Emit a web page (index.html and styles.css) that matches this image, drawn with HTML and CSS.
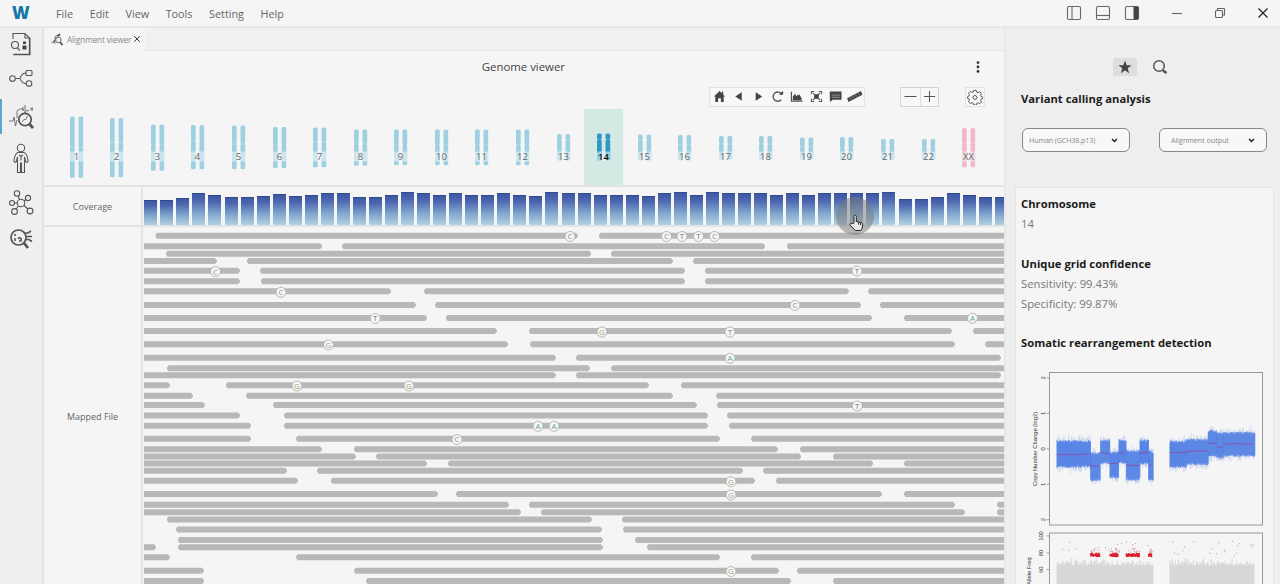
FILE: index.html
```html
<!DOCTYPE html>
<html lang="en">
	<head>
		<meta charset="UTF-8">
		<title>Genome viewer</title>
		<link rel="stylesheet" href="styles.css">
	</head>
	<body>
		<header class="titlebar">
			<div class="logo">W</div>
			<nav class="menu">
				<a>File</a><a>Edit</a><a>View</a><a>Tools</a><a>Setting</a><a>Help</a>
			</nav>
			<div class="win">
				<svg width="16" height="16" viewBox="0 0 16 16"><rect x="1.5" y="1.5" width="13" height="13" rx="1.5"/><path d="M6 1.5v13"/></svg>
				<svg width="16" height="16" viewBox="0 0 16 16"><rect x="1.5" y="1.5" width="13" height="13" rx="1.5"/><path d="M1.5 10.5h13"/></svg>
				<svg width="16" height="16" viewBox="0 0 16 16"><rect x="1.5" y="1.5" width="13" height="13" rx="1.5"/><path class="fill" d="M9.5 1.5h4l1 1v11l-1 1h-4z"/></svg>
				<svg class="min" width="12" height="12" viewBox="0 0 12 12"><path d="M1 6.500h10"/></svg>
				<svg class="max" width="12" height="12" viewBox="0 0 12 12"><rect x="1.500" y="3.500" width="7" height="7" rx="1"/><path d="M3.500 3.500V1.500h6.500l.5.5v6h-2"/></svg>
				<svg class="close" width="12" height="12" viewBox="0 0 12 12"><path d="M1.500 1.500l9 9M10.500 1.500l-9 9"/></svg>
			</div>
		</header>
		<div class="app">
			<aside class="side">
				<a><svg width="26" height="26" viewBox="0 0 26 26"><path d="M5 8V2.500h12l4.500 4.500v16.500H5M17 2.500V7h4.500"/><path d="M21.700 7v16.500H6" stroke-width="1.600"/><circle cx="7" cy="14" r="3.500"/><path d="M9.500 17l2.500 2.500"/><path class="fill" d="M15 10.500h3v2.500h-3zM14.500 14.500h4v4h-4z"/></svg></a>
				<a><svg width="26" height="26" viewBox="0 0 26 26"><circle cx="4.500" cy="13.500" r="2.800"/><rect x="18" y="5.500" width="6" height="5" rx="1"/><circle cx="21" cy="18.500" r="2.800"/><path d="M7.500 13.500h4c1.500 0 1-5.500 6.500-5.500M11.500 13.500c1.500 0 1 5 6.500 5"/></svg></a>
				<a class="on"><svg width="26" height="28" viewBox="0 0 26 28"><path class="thin" d="M1 18h4l1-4 1.500 9 1.500-6M9 15V9c0-3 5-4 7-2M15 4v4M17 2v8l2-3 2 1M22 6h3M24 4v4"/><circle cx="17" cy="16.500" r="6.200" stroke-width="1.700"/><path d="M21.500 21l3.500 4" stroke-width="2.800"/><path class="thin" d="M14 19l2.500-3 1 1 2-4"/></svg></a>
				<a><svg width="26" height="34" viewBox="0 0 26 34"><circle cx="13" cy="6" r="3.700"/><path d="M10 10.500c-3 1-3.500 4-4 8-.3 2 2 2.200 2.500.5l1-4v15.500h3V21h1v9.500h3V15l1 4c.5 1.700 2.800 1.500 2.500-.5-.5-4-1-7-4-8zM11 13l2 1.500 2-1.500M13 14.500v4"/></svg></a>
				<a><svg width="26" height="26" viewBox="0 0 26 26"><circle cx="13" cy="13" r="3.800"/><circle cx="9" cy="3.500" r="2.700"/><circle cx="20" cy="8" r="2.600"/><circle cx="4" cy="13" r="2.500"/><circle cx="6.500" cy="21.500" r="2.900"/><circle cx="22" cy="21" r="2.900"/><path d="M10 6l1.500 3.500M18 9.500l-2 1.500M6.500 13H9M10.500 16l-2.500 3M16 15.500l4 3.500"/></svg></a>
				<a><svg width="26" height="24" viewBox="0 0 26 24"><circle cx="10.500" cy="10.500" r="7.500" stroke-width="1.700"/><path d="M16 16l4 5" stroke-width="2.800"/><path d="M7 7v2M7 11v3M10 12c2-3 4 0 3 2h-2M17 6h3l3-2M18 9.500h6M18 12.500h3l3 2" stroke-width="1.600"/></svg></a>
			</aside>
			<main class="main">
				<div class="tabs">
					<div class="tab">
						<svg width="12" height="13" viewBox="0 0 26 28"><path d="M1 20h5l1-5 2 8M9 15V9c0-3 5-4 7-2" /><circle cx="16" cy="15" r="6"/><path d="M20 20l5 6M14 6l6-3" stroke-width="4"/></svg>
						<span>Alignment viewer</span>
						<svg class="x" width="8" height="8" viewBox="0 0 8 8"><path d="M1.200 1.200l5.500 5.500M6.700 1.200L1.200 6.700"/></svg>
					</div>
					<div class="tabfill"></div>
				</div>
				<div class="head">
					<h1>Genome viewer</h1>
					<svg class="dots" width="4" height="12" viewBox="0 0 4 12"><circle cx="2" cy="1.600" r="1.400"/><circle cx="2" cy="6" r="1.400"/><circle cx="2" cy="10.400" r="1.400"/></svg>
				</div>
				<div class="tools">
					<div class="group">
						<i><svg viewBox="0 0 14 14"><path class="fill" d="M7 1L1 7h1.500v6h3V9h3v4h3V7H13l-2-2V1.500H9.500V3.500z"/></svg></i>
						<i><svg viewBox="0 0 14 14"><path class="fill" d="M10.500 2.500v9L3.500 7z"/></svg></i>
						<i><svg viewBox="0 0 14 14"><path class="fill" d="M4 2.500v9L11 7z"/></svg></i>
						<i><svg viewBox="0 0 14 14"><path d="M11.500 4.500A5 5 0 1 0 11 10.500" stroke-width="1.500"/><path class="fill" d="M8.500 5H13V.8z"/></svg></i>
						<i><svg viewBox="0 0 14 14"><path d="M1.500 2v10h12" stroke-width="1.300"/><path class="fill" d="M3 11V7l2.500-3 1.500 3 1-2 1 1 1-1.500L12.500 9v2z"/></svg></i>
						<i><svg viewBox="0 0 14 14"><path d="M1.500 4.500v-3h3M9.500 1.500h3v3M12.500 9.500v3h-3M4.500 12.500h-3v-3M3 3l2 2M11 3L9 5M3 11l2-2M11 11L9 9"/><path class="fill" d="M4.500 4.500h5v5h-5z"/></svg></i>
						<i><svg viewBox="0 0 14 14"><path class="fill" d="M.8 1.500h12.700v9H4L1 13z"/><path class="light" d="M3 5.500h8.500M3 7.800h8.500"/></svg></i>
						<i><svg width="18" viewBox="-2 0 18 14"><path class="fill" d="M-1 9L14 1l1.500 4-15 8z"/><path class="light" d="M2 8l1 2M5 6.500l1 2M8 5l1 2M11 3.500l1 2"/></svg></i>
					</div>
					<div class="group zoom">
						<i><svg viewBox="0 0 14 14"><path d="M.5 7h13"/></svg></i>
						<i><svg viewBox="0 0 14 14"><path d="M1 7h12M7 1v12"/></svg></i>
					</div>
					<div class="group gear">
						<svg width="18" height="18" viewBox="0 0 18 18"><path d="M7.500 1.500h3l.5 2 1.500.7 1.800-1 2 2-1 1.800.6 1.500 2 .5v1.500l-2 .9-.6 1.300 1 1.800-2 2-1.800-1-1.500.6-.5 1.900h-3L7 16l-1.500-.6-1.800 1-2-2 1-1.800-.6-1.500-1.500-.6V8.700L2.100 8l.6-1.500-1-1.800 2-2 1.800 1L7 3.500z"/><circle cx="9" cy="9.500" r="2.200"/></svg>
					</div>
				</div>
				<div class="chroms" id="chroms"></div>
				<div class="track">
					<div class="label">Coverage</div>
					<div class="bars" id="bars"></div>
				</div>
				<div class="track mapped">
					<div class="label">Mapped File</div>
					<svg class="reads" id="reads" width="861" height="357" viewBox="143 227 861 357"></svg>
				</div>
				<svg class="cursor" width="40" height="40" viewBox="0 0 40 40"><circle cx="20" cy="20" r="19"/><path d="M19 27v-6.500c0-1.800 2.300-1.800 2.300 0v5l4.500 1c1.500.3 2 1 1.800 2.500l-.6 3.500-1.200 2h-5.500l-5.500-5.500c-.6-1.200.8-1.900 1.700-1.200z"/><path class="thin" d="M23.500 26.500v2M25.500 27v2"/></svg>
			</main>
			<section class="panel">
				<div class="switch">
					<span class="star"><svg width="14" height="14" viewBox="0 0 14 14"><path class="fill" d="M7 .5l1.700 4.700 4.900.1-3.900 3 1.400 4.900L7 10.300l-4.100 2.900 1.400-4.900-3.900-3 4.900-.1z"/></svg></span>
					<svg width="16" height="16" viewBox="0 0 16 16"><circle cx="7" cy="7" r="5.300" stroke-width="1.500"/><path d="M11 11.500l3.500 2.500" stroke-width="2.600"/></svg>
				</div>
				<h2>Variant calling analysis</h2>
				<div class="selects">
					<div class="select"><span>Human (GCH38.p13)</span><svg width="7" height="5" viewBox="0 0 7 5"><path d="M1 1l2.500 2.500L6 1"/></svg></div>
					<div class="select second"><span>Alignment output</span><svg width="7" height="5" viewBox="0 0 7 5"><path d="M1 1l2.500 2.500L6 1"/></svg></div>
				</div>
				<div class="card">
					<h2>Chromosome</h2>
					<p>14</p>
					<h2>Unique grid confidence</h2>
					<p>Sensitivity: 99.43%</p>
					<p>Specificity: 99.87%</p>
					<h2>Somatic rearrangement detection</h2>
					<svg class="plot" id="plot" width="256" height="230" viewBox="16 360 256 230"></svg>
				</div>
			</section>
		</div>
		<script src="main.js"></script>
	</body>
</html>
```
FILE: styles.css
```css
* {margin:0; padding:0; box-sizing:border-box;}
body {width:1280px; height:584px; overflow:hidden; background:#f5f5f5; font-family:"Open Sans","Noto Sans",sans-serif; color:#555; display:flex; flex-direction:column;}
svg {fill:none; stroke:#555; stroke-width:1.1; display:block; flex:none;}
.fill {fill:#444; stroke:none;}
.thin {stroke-width:.8;}
.light {stroke:#aaa; stroke-width:.8;}

.titlebar {height:28px; flex:none; display:flex; align-items:center; border-bottom:2px solid #e8e8e8; padding-left:12px;}
.logo {width:44px; font:800 17px/24px "Open Sans",sans-serif; color:#1478a8;}
.menu {display:flex; gap:16.600px; font-size:10.800px; color:#666;}
.win {margin-left:auto; display:flex; align-items:center; padding-right:11px;}
.win svg {margin-right:13px; stroke:#666;}
.win svg.min {margin-left:18px; margin-right:31px;}
.win svg.max {margin-right:31px;}
.win svg.close {margin-right:0; stroke:#222; stroke-width:1.2;}

.app {flex:1; min-height:0; display:flex;}
.side {width:44px; flex:none; background:#efefef; border-right:2px solid #e4e4e4; display:flex; flex-direction:column;}
.side a {display:flex; align-items:center; justify-content:center; height:34px; margin-top:-1px;}
.side a:nth-child(2) {margin-top:1px; height:32px;}
.side a.on {border-left:2px solid #5aa6cc; height:35px; margin-top:5px; padding-right:3px;}
.side a:nth-child(4) {margin-top:4px; height:42px;}
.side a:nth-child(5) {margin-top:5px; height:36px;}
.side a:nth-child(6) {margin-top:2px; height:32px;}

.main {width:960px; flex:none; display:flex; flex-direction:column; position:relative;}
.tabs {height:23px; flex:none; display:flex;}
.tab {width:101px; display:flex; align-items:center; padding-left:7px; font-size:8.200px; color:#888;}
.tab span {margin:0 2px 0 4px; white-space:nowrap; letter-spacing:-.12px;}
.tab svg {stroke-width:2;}
.tab .x {stroke:#333; stroke-width:1; margin-top:-2px;}
.tabfill {flex:1; background:#f0f0f0; border-bottom:1px solid #e6e6e6;}
.head {height:33px; flex:none; display:flex; align-items:center; justify-content:center; padding-bottom:2px;}
.head h1 {font-size:11.400px; font-weight:400; color:#444; margin-left:auto;}
.dots {margin-left:411px; margin-right:24px; stroke:none; fill:#333;}
.tools {height:25px; flex:none; display:flex; align-items:center; padding-left:665px;}
.group {display:flex; height:20px; border:1px solid #e2e2e2; background:#f8f8f8;}
.group i {width:19.300px; display:flex; align-items:center; justify-content:center;}
.group i svg {width:13px; height:13px;}
.group i svg[width="18"] {width:17px;}
.zoom {margin-left:35px; border-color:#d4d4d4;}
.zoom i {width:18.500px;}
.zoom i + i {border-left:1px solid #ddd;}
.gear {margin-left:26px; width:20px; align-items:center; justify-content:center;}
.gear svg {width:16px; height:16px;}

.chroms {height:76px; flex:none; display:grid; grid-template-columns:repeat(23,40.570px); padding-left:12px;}
.chrom {display:flex; justify-content:center;}
.chrom svg {stroke:none; width:39px; height:76px;}
.chrom.on svg {background:#d3e9e4;}
.chrom text, .reads text {font-family:"Open Sans",sans-serif; text-anchor:middle;}
.chrom text {font-size:9.500px; fill:#666;}
.chrom.on text {fill:#111; font-weight:600;}

.track {height:40px; flex:none; display:flex; border-top:2px solid #e3e3e3;}
.label {width:99px; flex:none; border-right:2px solid #e3e3e3; display:flex; align-items:center; justify-content:center; font-size:9px; color:#666; padding-top:1px;}
.bars {flex:1; display:flex; align-items:flex-end; overflow:hidden; padding-left:1.300px; background:linear-gradient(#f5f5f5 40%,#f0f6fa);}
.bar {width:13px; margin-right:3.050px; flex:none; background:linear-gradient(#3e58a3 0,#4b67ae 20%,#7fa4cd 60%,#b4cfdf 100%); border-top:1px solid #33498e;}
.mapped {height:auto; flex:1; min-height:0; overflow:hidden;}
.mapped .label {padding-top:22px;}
.reads {stroke:none;}
.reads path {fill:#b9b8b9;}
.reads circle {fill:#f7f6f6; stroke:#aaa; stroke-width:.8;}
.reads text {font-size:8px;}
.cursor {position:absolute; left:791px; top:168px; stroke:none;}
.cursor circle {fill:#777; fill-opacity:.5;}
.cursor path {fill:#e8e8e8; stroke:#222; stroke-width:1;}

.panel {flex:1; min-width:0; background:#eee; border-left:2px solid #e8e8e8; display:flex; flex-direction:column; padding:30px 6px 0 9px; overflow:hidden;}
.switch {display:flex; align-items:center; height:18px; padding-left:98px; flex:none;}
.star {width:24px; height:18px; margin-right:15px; background:#ddd; border-radius:2px; display:flex; align-items:center; justify-content:center;}
h2 {font-size:11.250px; line-height:20px; font-weight:700; color:#1c1c1c; white-space:nowrap;}
.panel > h2 {margin:13px 0 0 6px;}
.selects {display:flex; gap:29px; margin:19px 0 0 7px;}
.select {width:108px; height:24px; flex:none; border:1.500px solid #888; border-radius:6px; background:#f8f8f8; display:flex; align-items:center; justify-content:space-between; padding:0 11px 0 6px; font-size:7.200px; letter-spacing:-.15px; color:#888; white-space:nowrap;}
.select svg {stroke:#222; stroke-width:1.500;}
.second {padding-left:11px; letter-spacing:-.05px;}
.card {margin-top:35px; height:420px; width:259px; flex:none; background:#f5f5f5; border:1px solid #e6e6e6; padding:6px 0 0 5px;}
.card p {font-size:11.300px; line-height:20px; color:#777;}
.card p + h2 {margin-top:19.500px;}
.plot {margin:7px 0 0 -5px; stroke:none;}
.plot text {font-family:"Liberation Sans",sans-serif; font-size:5.800px; fill:#333; text-anchor:middle;}
.frame {fill:none; stroke:#999; stroke-width:1;}
```
FILE: main.js
```
var NS = "http://www.w3.org/2000/svg";
function $(id){ return document.getElementById(id); }

// small fixed-seed generator, so the plots look the same on every load
var seed = 7;
function rnd(){
	seed = (seed * 16807) % 2147483647;
	return seed / 2147483647;
}

// chromosomes: [top, centromere, bottom]
var chroms = [
	[116.5,147.5,178],[118,142.500,177.5],[124.5,145,171],[125,141,169.5],[125.5,144,169.5],[127,145,168.5],
	[127.5,142,167.5],[129.5,144,166],[129.5,145,165.5],[129.5,145,165.5],[129.5,145,165.5],[129.5,145,165.5],
	[134,140,161],[133.5,139.5,161],[134.5,140,161],[135,145,161],[136,144,160],[136,144,160],
	[137.5,147,160],[137,148,160],[139,145,160],[139,147,160],[128,143,167.5]
];
var html = "";
chroms.forEach(function(c,i){
	var on = i === 13, color = i === 22 ? "#efb7c8" : on ? "#2f97c4" : "#9fd0e2";
	var s = "";
	[13,21.500].forEach(function(x){
		s += '<rect x="'+x+'" y="'+c[0]+'" width="4.700" height="'+(c[1]-c[0])+'" rx="1.600" fill="'+color+'"/>';
		s += '<rect x="'+x+'" y="'+(c[1]-.2)+'" width="4.700" height="'+(c[2]-c[1])+'" rx="1.600" fill="'+color+'"/>';
	});
	s += '<rect x="13" y="151.500" width="13.200" height="10" fill="#f0f5f8" fill-opacity=".55"/>';
	s += '<text x="19.500" y="160.300">'+(i === 22 ? "XX" : i+1)+'</text>';
	html += '<div class="chrom'+(on ? " on" : "")+'"><svg viewBox="0 109 39 76">'+s+'</svg></div>';
});
$("chroms").innerHTML = html;

// coverage heights
var cov = [25.5,25.5,27.5,32,30,28,28,29.3,31,29.3,30,32,32,28,28.3,29.7,33,31.7,30.3,31.7,29.7,29.7,31.7,30.3,29.3,33,31.7,31.7,
	29.7,29.7,29.7,29,32,32.7,30.5,32.7,31.7,31.7,31.7,29.7,31.7,29.7,31.7,31.7,32.3,31.7,33,25.7,25.7,27.7,32,29.7,27.7,27.7];
$("bars").innerHTML = cov.map(function(h){
	return '<div class="bar" style="height:'+h+'px"></div>';
}).join("");

// mapped reads: y, then start/end pairs
var reads = [
	[235.8,155.5,578,599,1004],[246.3,144,322,342,765,787,1004],[253.7,166,591,611,1004],[261,144,217,247,673,693,1004],
	[270.7,144,240,260,685,705,1004],[281.3,144,240,261,685,705,1004],[291.3,144,391,424,849,868,1004],[305,144,416,435,861,880,1004],
	[318,144,427,446,872,904,1004],[331,144,497,529,952,973,1004],[344.3,144,508,530,955,985,1004],[357.7,144,556,576,1001],
	[368.3,167,590,611,1004],[375.3,144,556,576,1001],[385.3,144,170,226,649,681,1004],[395.7,144,193,246,673,716,1004],
	[405,144,205,273,697,717,1004],[415.5,144,240,284,708,727,1004],[425.7,144,251,284,708,729,1004],[438.8,144,251,296,720,751,1004],
	[449.3,144,322,354,778,800,1004],[456.5,144,356,376,801,833,1004],[463.5,144,427,448,873,904,1004],[470.7,144,287,317,743,763,1004],
	[480.7,144,298,331,755,776,1004],[494,144,438,456,882,904,1004],[504.7,144,509,529,955,997,1004],[512.3,144,521,541,965,997,1004],
	[519.5,167,592,622,1004],[529.5,176,602,623,1004],[540,178,603,635,1004],[547.2,144,156,178,603,647,1004],
	[557.3,144,170,296,720,751,1004],[570.7,144,204,354,779,797,1004],[581,144,204,366,791,833,1004]
];
var d = "";
reads.forEach(function(r){
	for(var i = 1; i < r.length; i += 2){
		var a = r[i], b = r[i+1], y = r[0], h = 3;
		var l = a === 144 ? 0 : 1.5, e = b === 1004 ? 0 : 2;
		d += "M"+(a+l)+" "+(y-h)+"H"+(b-e)+"L"+b+" "+(y-.8)+"V"+(y+.8)+"L"+(b-e)+" "+(y+h)+"H"+(a+l)+"L"+a+" "+(y+.8)+"V"+(y-.8)+"z";
	}
});
var marks = [
	["C",570,236.5],["C",666.5,236.5],["T",682,236.5],["T",698.5,236.5],["C",714.5,236.5],["C",215.5,271.7],["T",857,271],
	["C",281,292.3],["C",795,305.5],["T",375.3,318.5],["A",972.5,318.3],["G",602,332],["T",730,332],["G",328.5,345],["A",730,358.3],
	["G",297,386],["G",409,386],["T",857.3,406],["A",538,426.3],["A",554,426.3],["C",457,439.5],["G",731,481.7],["G",731,495],["G",731,571.5]
];
var letter = {C:"#8a8fa0", T:"#8a6a70", A:"#56ab98", G:"#a8a080"};
$("reads").innerHTML = '<path d="'+d+'"/>' + marks.map(function(m){
	return '<circle cx="'+m[1]+'" cy="'+m[2]+'" r="5"/><text x="'+m[1]+'" y="'+(m[2]+2.9)+'" fill="'+letter[m[0]]+'">'+m[0]+'</text>';
}).join("");

// copy number plot: x1, x2, top, bottom, red line (three units to a pixel)
var seg = [
	[141,242,244,320,284],[242,272,280,360,317],[272,300,242,308,279],[300,327,277,352,311],[327,349,242,308,279],
	[349,390,274,358,316],[390,416,242,310,279],[416,431,276,360,316],[480,530,245,320,278],[530,595,240,312,273],
	[595,620,214,287,249],[620,640,220,293,260],[640,735,219,287,252]
];
var blue = "", haze = "", red = "";
seg.forEach(function(s){
	for(var x = s[0]; x < s[1]; x += 1.5){
		blue += "M"+x+" "+(s[2]+rnd()*8-4).toFixed(1)+"V"+(s[3]+rnd()*8-4).toFixed(1);
		haze += "M"+x+" "+(s[2]-rnd()*rnd()*22).toFixed(1)+"V"+(s[3]+rnd()*rnd()*22).toFixed(1);
	}
	red += "M"+s[0]+" "+s[4];
	for(x = s[0]+8; x < s[1]; x += 8) red += "L"+x+" "+(s[4]+rnd()*4-2).toFixed(1);
});
// allele frequency plot
var grey = "", dots = "", reds = "";
[[141,431],[480,733]].forEach(function(s){
	for(var x = s[0]; x < s[1]; x += 2) grey += "M"+x+" "+(617-rnd()*rnd()*25).toFixed(1)+"V700";
	for(var i = 0; i < 20; i++) dots += "M"+(s[0]+rnd()*(s[1]-s[0])).toFixed(0)+" "+(543+rnd()*46).toFixed(0)+"h3";
});
[[242,271],[300,326],[349,391],[416,427]].forEach(function(s){
	for(var x = s[0]; x < s[1]; x += 3) reds += "M"+x+" "+(577+rnd()*5).toFixed(1)+"V"+(592-rnd()*3).toFixed(1);
	for(var i = 0; i < 8; i++) dots += "M"+(s[0]+rnd()*(s[1]-s[0])).toFixed(0)+" "+(565+rnd()*12).toFixed(0)+"h3";
});
var ticks = "", labels = "";
[["2",54],["1",160],["0",267],["1",373],["2",479],["100",528],["80",579],["60",629]].forEach(function(t){
	ticks += "M110 "+t[1]+"h8";
	labels += '<text transform="translate('+(t[1] > 500 ? 43 : 45)+' '+(360+t[1]/3)+') rotate(-90)">'+t[0]+'</text>';
});
$("plot").innerHTML =
	'<rect class="frame" x="49.500" y="372.500" width="213" height="152.500"/><rect class="frame" x="49.500" y="533" width="213" height="80"/>' +
	'<g transform="translate(10 360) scale(.3333)" fill="none">' +
	'<path d="'+haze+'" stroke="#a9bdec" stroke-width="1.200"/><path d="'+blue+'" stroke="#4d7de3" stroke-width="2.200"/>' +
	'<path d="'+red+'" stroke="#8b4fa8" stroke-width="3"/><path d="'+grey+'" stroke="#d3d3d3" stroke-width="2.500"/>' +
	'<path d="'+reds+'" stroke="#d8202f" stroke-width="3.400"/><path d="'+dots+'" stroke="#c98a90" stroke-width="3"/><path d="'+ticks+'" stroke="#999" stroke-width="3"/></g>' +
	labels +
	'<text transform="translate(36.500 449) rotate(-90)">Copy Number Change (log2)</text>' +
	'<text transform="translate(30.500 579) rotate(-90)">Minor Allele Freq</text>';
```
